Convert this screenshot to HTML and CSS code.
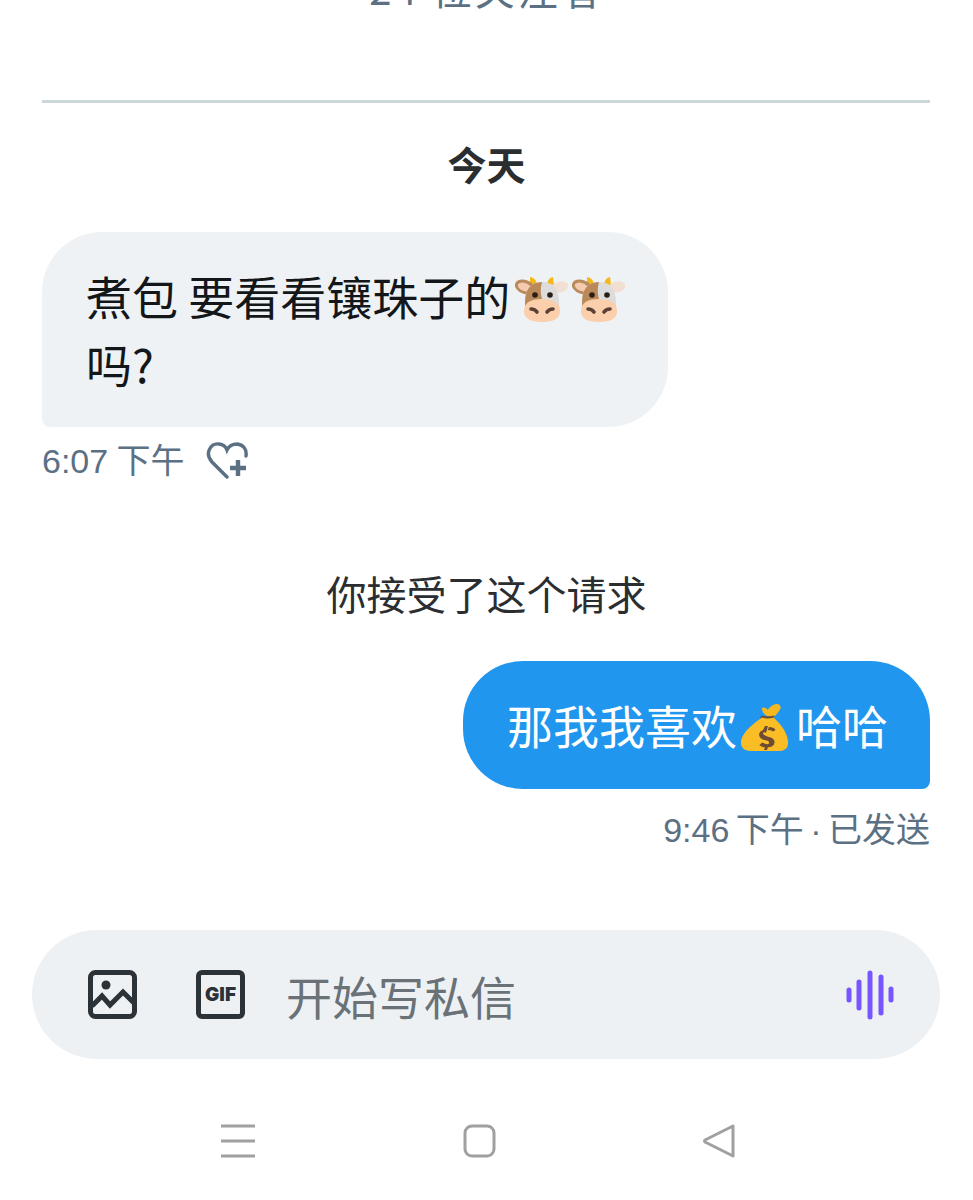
FILE: index.html
```html
<!DOCTYPE html>
<html>
<head>
	<meta charset="UTF-8">
	<meta name="viewport" content="width=device-width, initial-scale=1">
	<title>私信</title>
	<link rel="stylesheet" href="styles.css">
</head>
<body>
	<svg class="defs" width="0" height="0">
		<defs>
			<symbol id="cow" viewBox="0 0 54 48">
				<path d="M15 9 15 1q6 1 7 7zM39 9l-1-8q-5 1-6 7z" fill="#f3b919"/>
				<ellipse cx="10" cy="11" rx="10.500" ry="7" transform="rotate(20 10 11)" fill="#b98a5c"/>
				<ellipse cx="9.500" cy="11" rx="7" ry="4" transform="rotate(20 9.500 11)" fill="#f5cbb0"/>
				<ellipse cx="45" cy="11" rx="8.500" ry="5.500" transform="rotate(-15 45 11)" fill="#f2dfd3"/>
				<path d="M10 30Q9 6 27 6t17 24z" fill="#dcdcdc"/>
				<path d="M27 6Q9 6 10 30l18-4q-4-10-1-20z" fill="#b9895a"/>
				<path d="M9 35q0-12 18-12t18 12q0 11-18 11T9 35z" fill="#fbcfab"/>
				<circle cx="20" cy="19" r="2.800" fill="#2a1d16"/>
				<circle cx="35" cy="19" r="2.800" fill="#2a1d16"/>
				<path d="M16 33q4 0 6 3M38 33q-4 0-6 3" fill="none" stroke="#5a4035" stroke-width="3.600" stroke-linecap="round"/>
			</symbol>
		</defs>
	</svg>

	<div class="top-clip">
		<p class="followers">24 位关注者</p>
	</div>
	<div class="divider"></div>

	<h2 class="day">今天</h2>

	<div class="bubble in">煮包 要看看镶珠子的<svg class="emoji cow" width="54" height="48"><use href="#cow"/></svg><svg class="emoji cow" width="54" height="48"><use href="#cow"/></svg><br>吗?</div>
	<div class="meta">
		<span>6:07 下午</span>
		<svg class="heart" width="44" height="40" viewBox="0 0 44 40">
			<path d="M22 36 7 21C-1 12 6 2 14 3c4 .5 7 3 8 6 2-4 6-6 10-6 6 .5 10 5 9 12" fill="none" stroke="#5b7083" stroke-width="3.400" stroke-linecap="round"/>
			<path d="M33 19v16M25 27h16" fill="none" stroke="#5b7083" stroke-width="4.400"/>
		</svg>
	</div>

	<p class="notice">你接受了这个请求</p>

	<div class="bubble out">那我我喜欢<svg class="emoji bag" width="50" height="50" viewBox="0 0 52 52">
			<path d="M27 13q-5-4-4-8 3-1 6 2 4-6 10-6 4 1 3 5-3 6-8 9z" fill="#f5b81f"/>
			<path d="M22 13q6 2 13 0l1 3q-7 3-15 0z" fill="#6d4c33"/>
			<path d="M23 15Q1 30 1 41q0 9 12 9h26q12 0 11-10-1-12-15-25-6 2-12 0z" fill="#fbbd25"/>
			<path d="M30 25l-1 3q5 0 5 2l3-2q-2-3-7-3zM24 28q-5 2-4 6t8 5q3 1 2 3t-7-1l-3 3q3 2 6 2l-1 3h3l1-3q6 0 7-5 0-5-7-6-6-2-5-4 1-1 3 0l1-3 1-4h-3z" fill="#6d4c33"/>
		</svg>哈哈</div>
	<div class="meta sent"><span>9:46 下午 · 已发送</span></div>

	<div class="composer">
		<svg class="tool" width="49" height="49" viewBox="0 0 49 49">
			<rect x="2.500" y="2.500" width="44" height="44" rx="5" fill="none" stroke="#2b3238" stroke-width="5"/>
			<circle cx="18" cy="15" r="4.500" fill="#2b3238"/>
			<path d="M4 36 14 26l8 9 13-13 11 11" fill="none" stroke="#2b3238" stroke-width="5"/>
		</svg>
		<span class="tool gif">GIF</span>
		<span class="placeholder">开始写私信</span>
		<svg class="voice" width="48" height="50" viewBox="0 0 48 50">
			<path d="M3 20v10M13 12v26M24 3v44M35 7v36M45 19v11" fill="none" stroke="#7856ff" stroke-width="5" stroke-linecap="round"/>
		</svg>
	</div>

	<div class="nav">
		<svg width="34" height="34" viewBox="0 0 34 34">
			<path d="M0 2h34M0 17h34M0 32h34" stroke="#a0a0a0" stroke-width="3"/>
		</svg>
		<svg width="34" height="34" viewBox="0 0 34 34">
			<rect x="3" y="2" width="29" height="30" rx="7" fill="none" stroke="#a0a0a0" stroke-width="3"/>
		</svg>
		<svg width="34" height="34" viewBox="0 0 34 34">
			<path d="M31 2 3 16q-1 1 0 2l28 14z" fill="none" stroke="#a0a0a0" stroke-width="3" stroke-linejoin="round"/>
		</svg>
	</div>
</body>
</html>
```
FILE: styles.css
```css
* {
	box-sizing: border-box;
}
body {
	margin: 0;
	background: #fff;
	color: #14171a;
	font-family: "Noto Sans CJK SC", "Liberation Sans", sans-serif;
}
p, h2 {
	margin: 0;
}
.defs {
	display: block;
}
.top-clip {
	height: 100px;
	overflow: hidden;
	text-align: center;
}
.followers {
	margin-top: -32px;
	font-size: 40px;
	line-height: 40px;
	letter-spacing: 3px;
	color: #5b7083;
}
.divider {
	height: 3px;
	margin: 0 43px 0 42px;
	background: #ced7dc;
}
.day {
	margin-top: 36px;
	font-size: 39px;
	line-height: 48px;
	text-align: center;
	color: #2b2e31;
}
.bubble {
	font-size: 46px;
	line-height: 68px;
}
.bubble.in {
	width: 626px;
	height: 195px;
	margin: 45px 0 0 42px;
	padding: 29px 30px 0 44px;
	background: #eff2f4;
	border-radius: 60px 60px 60px 8px;
}
.bubble.out {
	width: 467px;
	height: 128px;
	margin: 42px 43px 0 auto;
	padding: 29px 0 0 44px;
	background: #2196ee;
	color: #fff;
	white-space: nowrap;
	border-radius: 60px 60px 8px 60px;
}
.emoji {
	vertical-align: -9px;
}
.cow {
	margin: 0 -2px 0 5px;
}
.bag {
	margin: 0 6px 0 3px;
}
.meta {
	display: flex;
	align-items: center;
	gap: 20px;
	margin: 14px 0 0 42px;
	font-family: "Liberation Sans", "Noto Sans CJK SC", sans-serif;
	font-size: 34px;
	line-height: 40px;
	word-spacing: -1px;
	color: #5b7083;
}
.meta.sent {
	justify-content: flex-end;
	margin: 21px 43px 0 0;
	word-spacing: -3px;
}
.notice {
	margin-top: 86px;
	font-size: 40px;
	line-height: 52px;
	text-align: center;
	color: #2b2e31;
}
.composer {
	display: flex;
	align-items: center;
	width: 908px;
	height: 129px;
	margin: 80px 0 0 32px;
	padding: 0 46px 0 56px;
	background: #eef1f4;
	border-radius: 65px;
}
.tool {
	flex: none;
}
.gif {
	display: flex;
	align-items: center;
	justify-content: center;
	width: 49px;
	height: 49px;
	margin-left: 59px;
	border: 5px solid #2b3238;
	border-radius: 6px;
	font-family: "Inter", "Liberation Sans", sans-serif;
	font-size: 19px;
	font-weight: 900;
	color: #2b3238;
}
.placeholder {
	margin-left: 41px;
	font-size: 46px;
	color: #6a7278;
}
.voice {
	margin-left: auto;
}
.nav {
	display: flex;
	justify-content: space-between;
	margin-top: 65px;
	padding: 0 237px 0 221px;
}
```
